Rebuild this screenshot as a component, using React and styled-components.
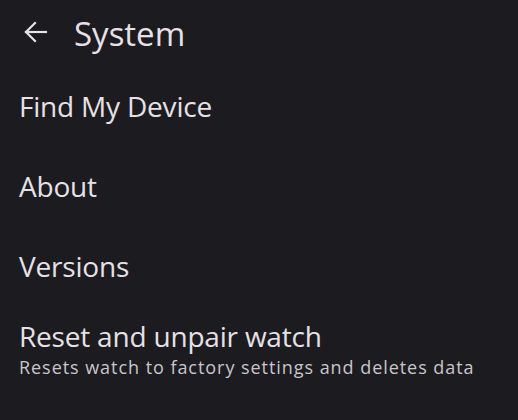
import React from "react";
import styled, { createGlobalStyle } from "styled-components";

const Global = createGlobalStyle`
  html, body {
    margin: 0;
    padding: 0;
    background: #1c1b20;
  }
  body {
    font-family: "Open Sans", Roboto, sans-serif;
    -webkit-font-smoothing: antialiased;
  }
`;

const Screen = styled.div`
  width: 518px;
  height: 420px;
  background: #1c1b20;
  color: #e6e1e6;
  overflow: hidden;
`;

const Header = styled.header`
  height: 64px;
  padding-top: 2px;
  display: flex;
  align-items: center;
`;

const BackButton = styled.button`
  display: flex;
  align-items: center;
  justify-content: center;
  width: 24px;
  height: 24px;
  margin-left: 24px;
  margin-right: 26px;
  margin-bottom: 4px;
  padding: 0;
  border: none;
  background: transparent;
  color: #e6e1e6;
`;

const Title = styled.h1`
  margin: 0;
  font-size: 33px;
  line-height: 40px;
  font-weight: 400;
  color: #e6e1e6;
`;

const List = styled.div`
  display: flex;
  flex-direction: column;
`;

const Item = styled.div`
  min-height: 80px;
  padding: ${(p) => (p.$twoLine ? "5px 19px 0" : "0 19px")};
  box-sizing: border-box;
  display: flex;
  flex-direction: column;
  justify-content: center;
  gap: 1px;
`;

const ItemTitle = styled.div`
  font-size: 28px;
  line-height: 36px;
  letter-spacing: -0.2px;
  color: #e6e1e6;
`;

const ItemSubtitle = styled.div`
  font-size: 18px;
  line-height: 24px;
  letter-spacing: 0.95px;
  color: #c9c5ca;
`;

const items = [
  { title: "Find My Device" },
  { title: "About" },
  { title: "Versions" },
  {
    title: "Reset and unpair watch",
    subtitle: "Resets watch to factory settings and deletes data",
  },
];

export default function App() {
  return (
    <>
      <Global />
      <Screen>
        <Header>
          <BackButton aria-label="Back">
            <svg width="24" height="24" viewBox="0 0 24 24" fill="none" stroke="currentColor" strokeWidth="2.2" strokeLinecap="square">
              <path d="M2 12H22" />
              <path d="M11 3L2 12L11 21" />
            </svg>
          </BackButton>
          <Title>System</Title>
        </Header>
        <List>
          {items.map((it) => (
            <Item key={it.title} $twoLine={!!it.subtitle}>
              <ItemTitle>{it.title}</ItemTitle>
              {it.subtitle && <ItemSubtitle>{it.subtitle}</ItemSubtitle>}
            </Item>
          ))}
        </List>
      </Screen>
    </>
  );
}
